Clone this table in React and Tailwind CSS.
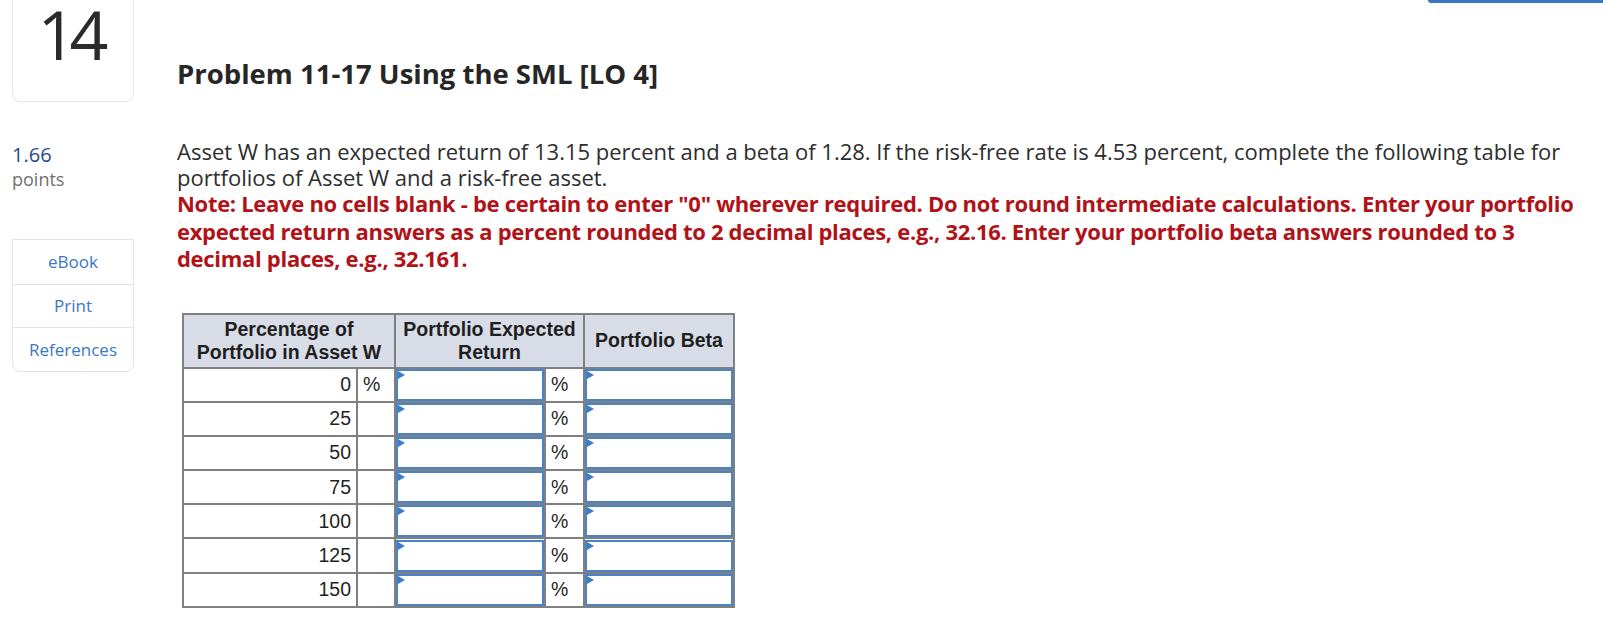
import React from 'react';

const rows = [0, 25, 50, 75, 100, 125, 150];

// answer box with the little blue flag in its corner
const AnswerBox = () => (
  <div className="relative h-[32px] w-full border-2 border-[#4a83c6] bg-white">
    <span className="absolute left-0 top-0 h-0 w-0 border-y-[4px] border-l-[7px] border-y-transparent border-l-[#3d7cc9]" />
  </div>
);

const App = () => {
  return (
    <div className="relative min-h-screen bg-white font-['Open_Sans',sans-serif] text-[#2d2d2d]">
      {/* bottom edge of a button that sits above the viewport */}
      <div className="absolute right-0 top-0 h-[3px] w-[175px] rounded-bl-md bg-[#3a77bf]" />

      <div className="flex gap-[43px] px-3">
        {/* Left column */}
        <aside className="w-[122px] shrink-0">
          <div className="flex h-[102px] justify-center rounded-b-lg border border-t-0 border-[#e6e6e6]">
            <div className="pr-[7px] text-[68px] leading-[68px] tracking-[-7px] text-[#2b2b2b]">14</div>
          </div>

          <div className="mt-[41px]">
            <div className="text-[20px] leading-[24px] text-[#1d4c8c]">1.66</div>
            <div className="text-[18px] leading-[25px] text-[#707070]">points</div>
          </div>

          <div className="mt-[47px] flex flex-col rounded-b-lg border border-[#e4e4e4] text-[17px] text-[#3a78c4]">
            <a href="#" className="flex h-[45px] items-center justify-center border-b border-[#e4e4e4]">eBook</a>
            <a href="#" className="flex h-[43px] items-center justify-center border-b border-[#e4e4e4]">Print</a>
            <a href="#" className="flex h-[43px] items-center justify-center">References</a>
          </div>
        </aside>

        {/* Main content */}
        <main className="flex-1">
          <h1 className="mt-[58px] text-[27.5px] font-bold leading-[32px] text-[#262626]">
            Problem 11-17 Using the SML [LO 4]
          </h1>

          <div className="mt-[49px] text-[22px]">
            <p className="leading-[25.5px]">
              Asset W has an expected return of 13.15 percent and a beta of 1.28. If the risk-free rate is 4.53 percent, complete the following table for portfolios of Asset W and a risk-free asset.
            </p>
            <p className="font-bold leading-[27.5px] tracking-[-0.3px] text-[#b11218]">
              Note: Leave no cells blank - be certain to enter "0" wherever required. Do not round intermediate calculations. Enter your portfolio expected return answers as a percent rounded to 2 decimal places, e.g., 32.16. Enter your portfolio beta answers rounded to 3 decimal places, e.g., 32.161.
            </p>
          </div>

          <table className="ml-[5px] mt-[40px] w-[551px] table-fixed border-collapse border-2 border-[#808080] font-['Liberation_Sans',Arial,sans-serif] text-[19.5px] text-[#1f1f1f]">
            <colgroup>
              <col className="w-[174px]" />
              <col className="w-[38px]" />
              <col className="w-[150px]" />
              <col className="w-[39px]" />
              <col className="w-[150px]" />
            </colgroup>
            <thead>
              <tr className="h-[54px] bg-[#d8dce6] font-bold leading-[23px]">
                <th colSpan={2} className="border-2 border-[#808080] px-1 text-center">
                  Percentage of
                  <br />
                  Portfolio in Asset W
                </th>
                <th colSpan={2} className="border-2 border-[#808080] px-1 text-center">
                  Portfolio Expected
                  <br />
                  Return
                </th>
                <th className="border-2 border-[#808080] px-1 text-center">Portfolio Beta</th>
              </tr>
            </thead>
            <tbody>
              {rows.map((value, i) => (
                <tr key={value} className="h-[34.2px]">
                  <td className="border-2 border-[#808080] pr-[5px] text-right">{value}</td>
                  <td className="border-2 border-[#808080] pl-[5px]">{i === 0 ? '%' : ''}</td>
                  <td className="border-2 border-[#808080] p-0">
                    <AnswerBox />
                  </td>
                  <td className="border-2 border-[#808080] pl-[5px]">%</td>
                  <td className="border-2 border-[#808080] p-0">
                    <AnswerBox />
                  </td>
                </tr>
              ))}
            </tbody>
          </table>
        </main>
      </div>
    </div>
  );
};

export default App;
